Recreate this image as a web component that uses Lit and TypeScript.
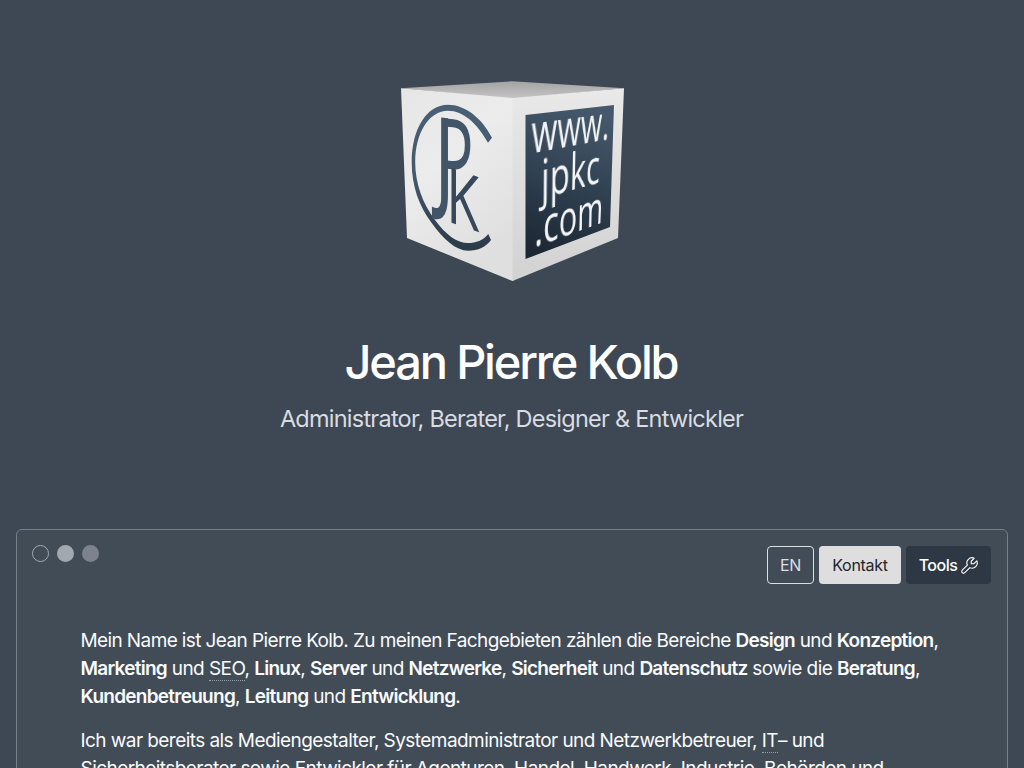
import { LitElement, html, css } from "lit";
import { customElement } from "lit/decorators.js";

type Point = [number, number];

/** CSS matrix3d that maps a w×h box onto four corners (tl, tr, br, bl). */
function projectBox(w: number, h: number, [p0, p1, p2, p3]: Point[]): string {
  const dx1 = p1[0] - p2[0], dx2 = p3[0] - p2[0], sx = p0[0] - p1[0] + p2[0] - p3[0];
  const dy1 = p1[1] - p2[1], dy2 = p3[1] - p2[1], sy = p0[1] - p1[1] + p2[1] - p3[1];
  const det = dx1 * dy2 - dx2 * dy1;
  const g = (sx * dy2 - dx2 * sy) / det;
  const k = (dx1 * sy - sx * dy1) / det;
  const a = p1[0] - p0[0] + g * p1[0], b = p3[0] - p0[0] + k * p3[0];
  const d = p1[1] - p0[1] + g * p1[1], e = p3[1] - p0[1] + k * p3[1];
  const m = [a / w, d / w, 0, g / w, b / h, e / h, 0, k / h, 0, 0, 1, 0, p0[0], p0[1], 0, 1];
  return `matrix3d(${m.map((n) => n.toFixed(7)).join(",")})`;
}

@customElement("cube-logo")
class CubeLogo extends LitElement {
  static styles = css`
    :host { display: block; position: relative; width: 224px; height: 202px; }
    .body { display: block; width: 224px; height: 202px; }
    .screen { position: absolute; left: 0; top: 0; width: 104px; height: 144px; transform-origin: 0 0; overflow: visible; }
    .mono { font-family: "Open Sans", sans-serif; font-weight: 500; }
    .stem { font-weight: 600; }
    .site { font-family: "Open Sans", sans-serif; font-size: 54px; fill: #f4f5f6; }
  `;
  render() {
    const t = projectBox(104, 144, [[125.5, 35], [214, 25], [210, 147], [125.5, 179]]);
    return html`
      <svg class="body" viewBox="400 80 224 202">
        <defs>
          <linearGradient id="l" x1="0" y1="0" x2="0.5" y2="1">
            <stop offset="0" stop-color="#e6e6e7" /><stop offset=".45" stop-color="#ececed" /><stop offset="1" stop-color="#dfdfe0" />
          </linearGradient>
          <linearGradient id="r" x1="0" y1="0" x2="0" y2="1">
            <stop offset="0" stop-color="#e9e9e9" /><stop offset="1" stop-color="#d2d2d3" />
          </linearGradient>
          <linearGradient id="t" x1="0" y1="0" x2="0" y2="1">
            <stop offset="0" stop-color="#a3a3a4" /><stop offset="1" stop-color="#c6c6c6" />
          </linearGradient>
          <linearGradient id="m" gradientUnits="userSpaceOnUse" x1="0" y1="104" x2="0" y2="250">
            <stop offset="0" stop-color="#4a6075" /><stop offset=".5" stop-color="#45586b" /><stop offset="1" stop-color="#2b3a49" />
          </linearGradient>
          <linearGradient id="s" x1=".6" y1="0" x2=".4" y2="1">
            <stop offset="0" stop-color="#46596c" /><stop offset=".5" stop-color="#304152" /><stop offset="1" stop-color="#1c2733" />
          </linearGradient>
        </defs>
        <path fill="url(#t)" d="M401 88.300 512 81.300 624 88.300 512 99z" />
        <path fill="url(#l)" d="M401 88.300 512.500 98 514 98V280L512.500 281 407 238z" />
        <path fill="url(#r)" d="M512.500 98 624 88.300 618 238 512.500 281z" />
        <path fill="url(#s)" d="M525.500 115 614 105 610 227 525.500 259z" />
        <path fill="url(#m)" d="M492 137.700C482 118 465 104.700 448 104.700C426 104.700 411.700 130 411.700 162C411.700 186 419 206 431.700 223C443 239 456 250.700 468 250.700C478 250.700 486 247 491 240L488.300 234C483 240.500 476 243 468 243C457 243 446 235 435 220C423 204 415.200 184 415.200 162C415.200 133 429 110.700 448 110.700C463 110.700 477 123 488 142.700z" />
        <g class="mono" fill="#425568">
          <text class="stem" font-size="112" transform="matrix(.5 .05 0 1 436.200 197)">J</text>
          <text font-size="116" transform="matrix(.55 .06 0 1 435.200 200)">P</text>
          <text font-size="77" transform="matrix(.7 .24 0 1 446.200 221)" fill="#37485a">K</text>
        </g>
      </svg>
      <svg class="screen" style="transform:${t}" viewBox="0 0 104 144">
        <g class="site">
          <text x="6" y="38" textLength="92" lengthAdjust="spacingAndGlyphs">www.</text>
          <text x="16" y="86" textLength="71" lengthAdjust="spacingAndGlyphs">jpkc</text>
          <text x="9" y="135" textLength="84" lengthAdjust="spacingAndGlyphs">.com</text>
        </g>
      </svg>
    `;
  }
}

@customElement("app-root")
class AppRoot extends LitElement {
  static styles = css`
    :host { display: block; height: 768px; overflow: hidden; background: #3d4854; color: #fafbfc; font-family: Inter, "Liberation Sans", sans-serif; }
    header { display: flex; flex-direction: column; align-items: center; padding-top: 80px; height: 449px; }
    h1 { margin: 51px 2px 0 0; font-size: 47px; line-height: 58px; font-weight: 500; letter-spacing: -2.2px; color: #fff; }
    .lead { margin: 13px 1px 0 0; font-size: 23.5px; line-height: 30px; font-weight: 400; letter-spacing: -.76px; color: #d9dce1; }
    main { box-sizing: border-box; margin: 0 16px; height: 320px; border: 1px solid #76808a; border-radius: 6px; background: #414c57; padding: 16px; }
    .bar { display: flex; justify-content: space-between; align-items: flex-start; height: 38px; }
    .dots { display: flex; gap: 8px; margin: -1px 0 0 -1px; }
    .dot { box-sizing: border-box; width: 17px; height: 17px; border-radius: 50%; }
    .ring { border: 1px solid #a2a9b1; }
    .light { background: #a2a8b0; }
    .dim { background: #7c838e; }
    .buttons { display: flex; gap: 5px; }
    .btn { box-sizing: border-box; display: flex; align-items: center; justify-content: center; gap: 4px; height: 38px; border-radius: 4px; font-size: 16px; letter-spacing: -.3px; }
    .lang { width: 47px; border: 1px solid #dcdfe2; color: #dcdfe2; }
    .contact { width: 82px; background: #dedede; color: #212529; }
    .tools { width: 85px; background: #2d3844; color: #fff; font-weight: 500; letter-spacing: -.5px; }
    .icon { width: 17px; height: 17px; }
    .text { padding: 43px 48px 0 47.500px; font-size: 19px; line-height: 28px; letter-spacing: -.61px; white-space: nowrap; }
    p { margin: 0 0 16px; }
    .line { display: block; }
    .loose { letter-spacing: -.56px; }
    b { font-weight: 600; letter-spacing: -.74px; }
    abbr { text-decoration: none; border-bottom: 1px dotted #9aa2aa; }
  `;
  render() {
    return html`
      <header>
        <cube-logo></cube-logo>
        <h1>Jean Pierre Kolb</h1>
        <div class="lead">Administrator, Berater, Designer &amp; Entwickler</div>
      </header>
      <main>
        <div class="bar">
          <div class="dots"><span class="dot ring"></span><span class="dot light"></span><span class="dot dim"></span></div>
          <div class="buttons">
            <span class="btn lang">EN</span><span class="btn contact">Kontakt</span>
            <span class="btn tools">Tools
              <svg class="icon" viewBox="2 2 20 20" fill="none" stroke="currentColor" stroke-width="1.300" stroke-linejoin="round"><path d="M17 10h-3V7l3.500-3.500a6 6 0 0 0-8 8l-6 6a2 2 0 0 0 3 3l6-6a6 6 0 0 0 8-8L17 10z" /></svg></span>
          </div>
        </div>
        <div class="text">
          <p>
            <span class="line">Mein Name ist Jean Pierre Kolb. Zu meinen Fachgebieten zählen die Bereiche <b>Design</b> und <b>Konzeption</b>,</span>
            <span class="line loose"><b>Marketing</b> und <abbr>SEO</abbr>, <b>Linux</b>, <b>Server</b> und <b>Netzwerke</b>, <b>Sicherheit</b> und <b>Datenschutz</b> sowie die <b>Beratung</b>,</span>
            <span class="line loose"><b>Kundenbetreuung</b>, <b>Leitung</b> und <b>Entwicklung</b>.</span>
          </p>
          <p>
            <span class="line loose">Ich war bereits als Mediengestalter, Systemadministrator und Netzwerkbetreuer, <abbr>IT</abbr>– und</span>
            <span class="line loose">Sicherheitsberater sowie Entwickler für Agenturen, Handel, Handwerk, Industrie, Behörden und</span>
          </p>
        </div>
      </main>
    `;
  }
}
